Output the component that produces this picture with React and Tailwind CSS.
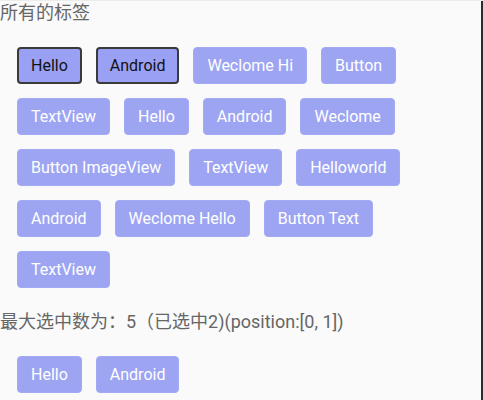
import React from "react";

const allTags = [
  "Hello", "Android", "Weclome Hi", "Button", "TextView", "Hello", "Android",
  "Weclome", "Button ImageView", "TextView", "Helloworld", "Android",
  "Weclome Hello", "Button Text", "TextView",
];

const Tag = ({ text, selected }) => (
  <div
    className={
      "m-[7px] h-[37px] flex items-center rounded-[4px] text-[16px] leading-none " +
      (selected
        ? "px-[12px] border-2 border-[#3a3a3a] bg-[#9aa1f4] text-[#111]"
        : "px-[13px] border border-[#a3aaf4] bg-[#9da5f3] text-white")
    }
  >
    {text}
  </div>
);

export default function App() {
  return (
    <div
      className="flex h-[400px] w-full bg-[#fafafa] border-t border-[#ececec]"
      style={{ fontFamily: "Roboto, 'Noto Sans CJK SC', sans-serif" }}
    >
      <div className="flex-1 flex flex-col -mt-px">
        <div className="text-[18px] leading-[26px] text-[#666666]">所有的标签</div>
        <div className="flex flex-wrap pt-[14px] pb-[14px] pl-[10px] pr-[10px]">
          {allTags.map((t, i) => (
            <Tag key={i} text={t} selected={i < 2} />
          ))}
        </div>
        <div className="text-[18px] leading-[26px] text-[#666666]">
          最大选中数为：5（已选中2)(position:[0, 1])
        </div>
        <div className="flex flex-wrap pt-[14px] pl-[10px]">
          <Tag text="Hello" />
          <Tag text="Android" />
        </div>
      </div>
      <div className="w-[2px] bg-[#2b2b2b]" />
    </div>
  );
}
